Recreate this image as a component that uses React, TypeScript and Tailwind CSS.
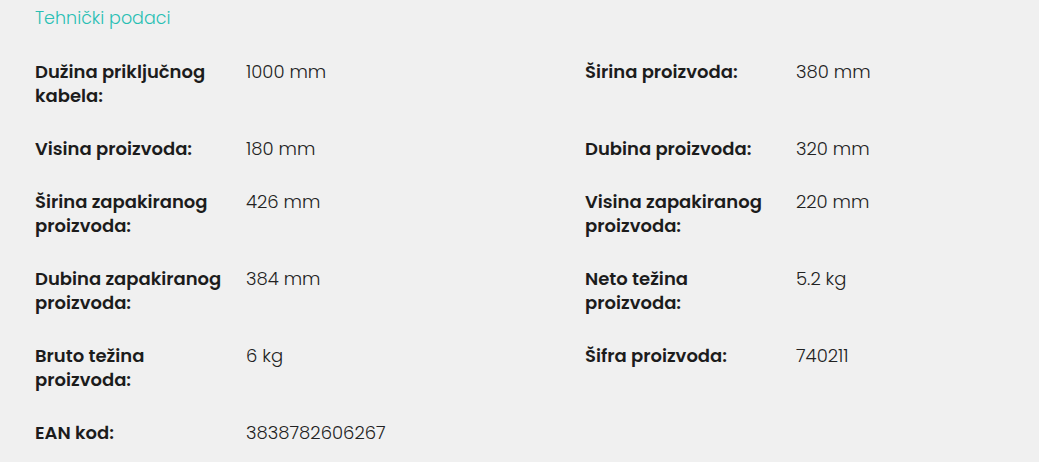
import React from "react";

const rows: [string, string, string?, string?][] = [
  ["Dužina priključnog kabela:", "1000 mm", "Širina proizvoda:", "380 mm"],
  ["Visina proizvoda:", "180 mm", "Dubina proizvoda:", "320 mm"],
  ["Širina zapakiranog proizvoda:", "426 mm", "Visina zapakiranog proizvoda:", "220 mm"],
  ["Dubina zapakiranog proizvoda:", "384 mm", "Neto težina proizvoda:", "5.2 kg"],
  ["Bruto težina proizvoda:", "6 kg", "Šifra proizvoda:", "740211"],
  ["EAN kod:", "3838782606267"],
];

function Cell({ label, value }: { label?: string; value?: string }) {
  if (!label) return <div />;
  return (
    <div className="flex">
      <div className="w-[211px] shrink-0 pr-[18px] font-semibold text-[#1c1c1c]">{label}</div>
      <div className="font-light text-[#222]">{value}</div>
    </div>
  );
}

export default function App() {
  return (
    <div
      className="w-[1039px] h-[462px] overflow-hidden bg-[#f0f0f0] pl-[35px] pt-[6px]"
      style={{ fontFamily: "Poppins, 'Open Sans', sans-serif" }}
    >
      <div className="text-[17.5px] leading-[24px] font-light text-[#29bfb4]">Tehnički podaci</div>
      <div className="mt-[30px] grid grid-cols-[550px_1fr] gap-y-[29px] text-[18px] leading-[24px]">
        {rows.map((r, i) => (
          <React.Fragment key={i}>
            <Cell label={r[0]} value={r[1]} />
            <Cell label={r[2]} value={r[3]} />
          </React.Fragment>
        ))}
      </div>
    </div>
  );
}
